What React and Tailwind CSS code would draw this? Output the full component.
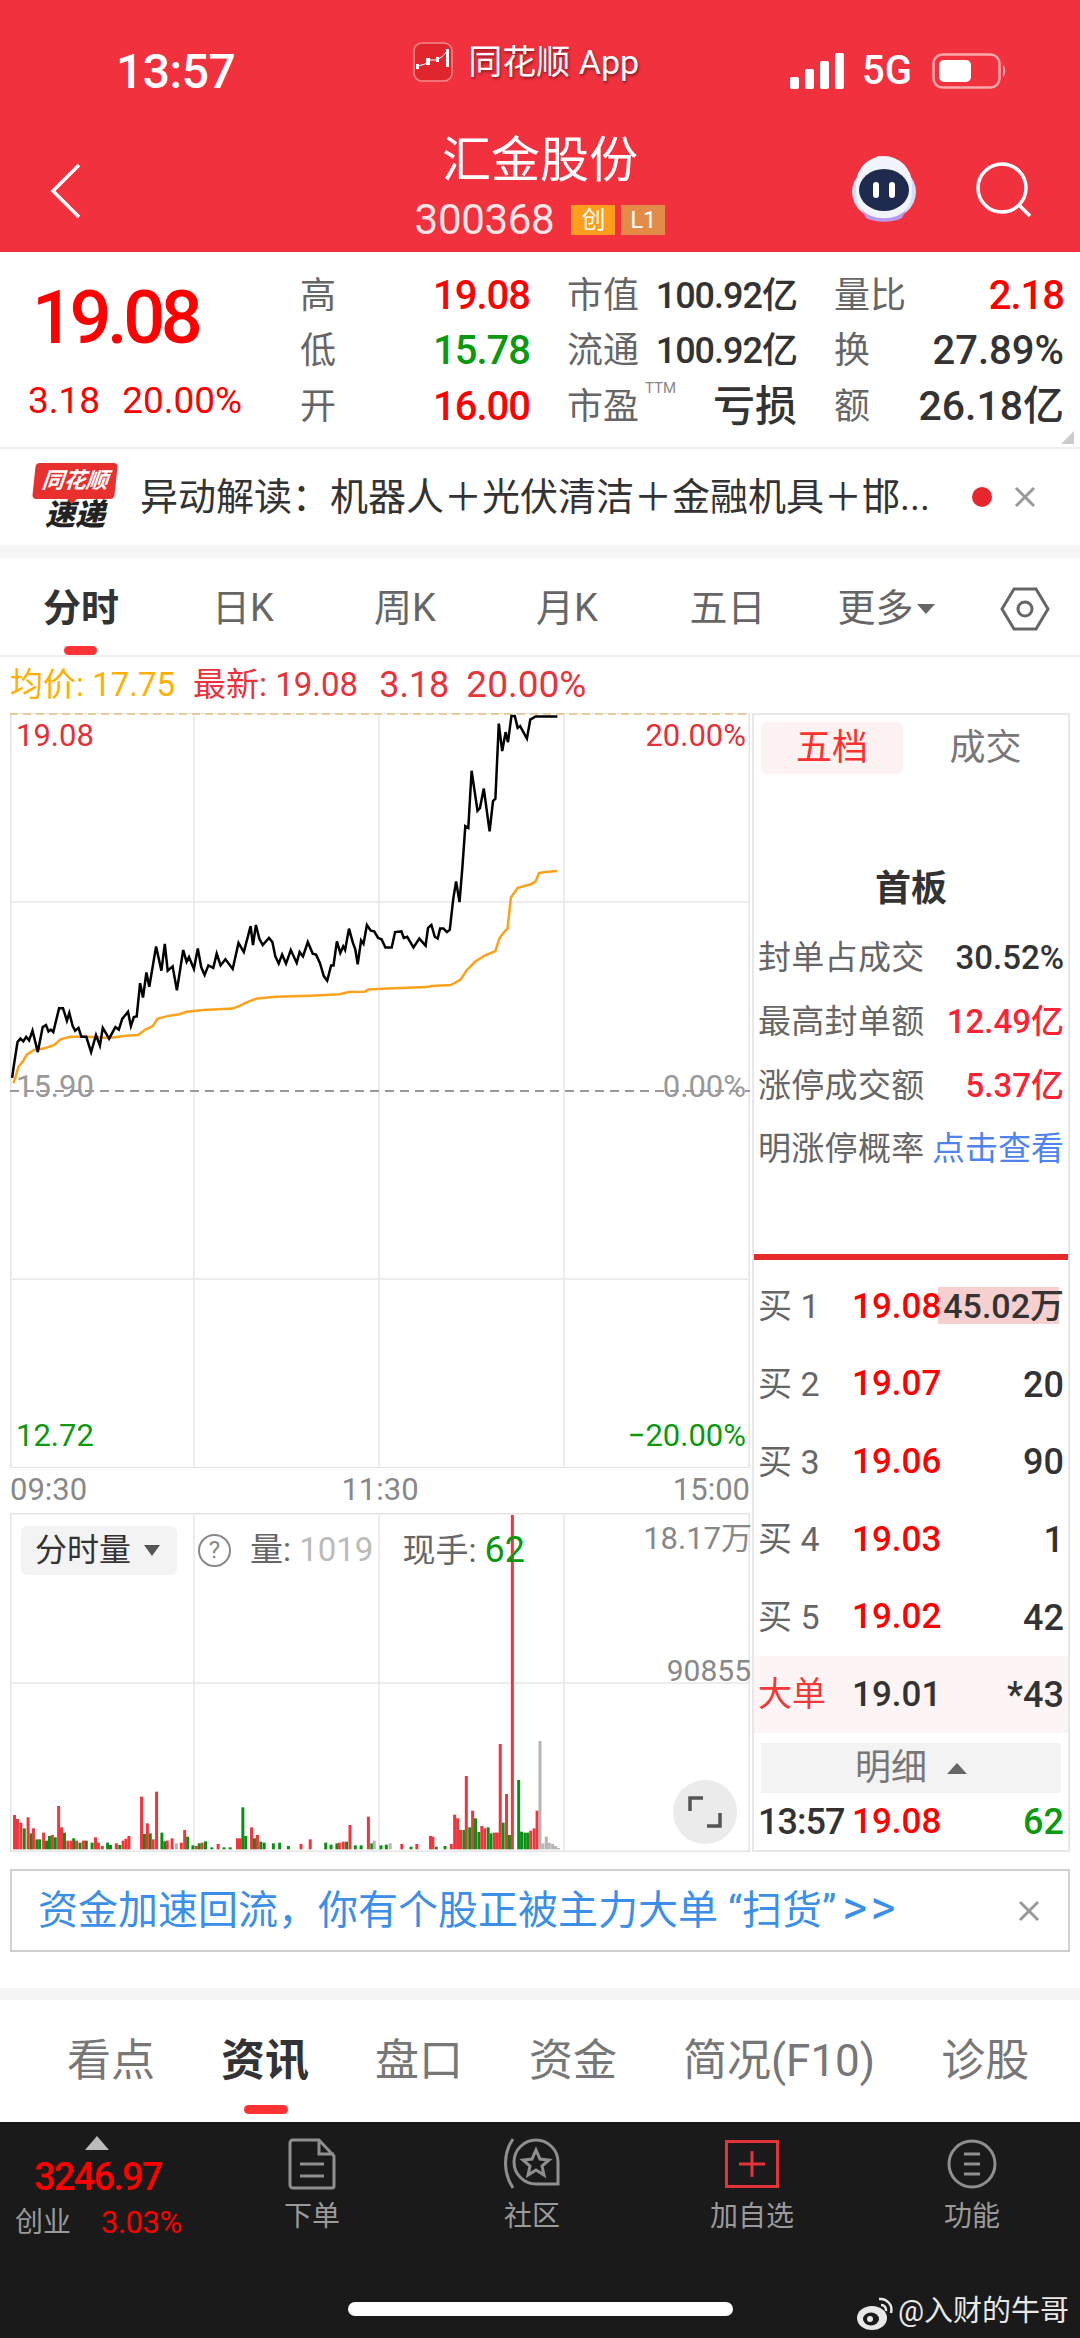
import React from "react";

const RED = "text-[#ff0000]";
const GREEN = "text-[#0a990f]";

// chart points are read off the reference, in 2.063x / 2.8x crop units
const toPts = (arr) =>
  arr.map(([x, y]) => `${(x / 2.063).toFixed(1)},${(560 + y / 2.8).toFixed(1)}`).join(" ");

const priceLine = [
  [25,1450],[28,1420],[36,1350],[42,1340],[48,1348],[54,1335],[60,1345],[67,1318],[78,1378],[88,1308],[95,1302],[100,1320],[105,1315],[110,1322],[122,1255],[130,1255],[138,1290],[143,1268],[150,1305],[155,1318],[162,1310],[168,1335],[178,1335],[188,1378],[198,1330],[206,1360],[212,1310],[225,1340],[238,1308],[245,1315],[252,1285],[264,1265],[270,1305],[276,1280],[282,1278],[289,1185],[295,1225],[302,1155],[308,1195],[322,1082],[333,1150],[340,1075],[346,1150],[356,1138],[365,1205],[378,1092],[385,1125],[390,1112],[400,1145],[408,1088],[415,1140],[422,1162],[430,1135],[440,1142],[447,1102],[455,1135],[465,1118],[480,1145],[492,1072],[503,1098],[517,1025],[522,1078],[528,1022],[535,1060],[542,1078],[555,1058],[562,1070],[568,1110],[575,1130],[582,1105],[590,1130],[600,1092],[612,1128],[618,1098],[625,1110],[635,1070],[645,1102],[652,1105],[660,1128],[668,1165],[675,1178],[683,1135],[688,1135],[695,1068],[702,1100],[708,1082],[712,1092],[720,1032],[728,1072],[733,1090],[738,1132],[745,1065],[750,1075],[757,1022],[765,1038],[772,1040],[780,1058],[787,1062],[795,1085],[808,1085],[815,1042],[828,1040],[833,1058],[840,1055],[853,1085],[865,1060],[878,1080],[883,1030],[890,1022],[897,1055],[903,1060],[908,1032],[915,1032],[922,1042],[928,1035],[935,950],[941,900],[948,958],[954,860],[960,745],[966,750],[973,590],[985,702],[990,695],[998,640],[1010,760],[1017,675],[1022,668],[1029,458],[1036,535],[1043,482],[1048,510],[1055,437],[1062,437],[1068,470],[1073,465],[1087,500],[1094,447],[1105,438],[1150,438],
];

const avgLine = [
  [28,1465],[38,1420],[48,1402],[55,1385],[70,1372],[90,1368],[112,1358],[125,1342],[145,1335],[180,1335],[225,1338],[260,1332],[285,1330],[300,1315],[315,1305],[325,1285],[345,1277],[370,1272],[385,1265],[420,1260],[480,1256],[495,1248],[510,1238],[530,1228],[570,1223],[640,1220],[700,1216],[720,1210],[752,1209],[760,1203],[800,1200],[880,1196],[890,1193],[930,1190],[950,1175],[962,1150],[980,1125],[1000,1108],[1022,1095],[1030,1060],[1040,1042],[1047,1032],[1054,945],[1068,918],[1095,908],[1105,900],[1112,877],[1125,874],[1150,871],
];

const redBars = [[30,1185],[36,1197],[43,1208],[58,1192],[69,1225],[90,1238],[108,1245],[121,1158],[127,1222],[140,1262],[147,1262],[158,1262],[172,1262],[197,1252],[203,1268],[211,1278],[240,1270],[254,1262],[260,1256],[266,1248],[292,1130],[304,1210],[316,1258],[323,1115],[345,1262],[355,1255],[374,1268],[381,1230],[405,1278],[417,1268],[450,1272],[490,1255],[496,1255],[519,1222],[531,1245],[621,1272],[640,1258],[700,1268],[708,1265],[722,1215],[760,1190],[829,1272],[860,1272],[888,1248],[893,1250],[931,1272],[938,1184],[944,1195],[950,1230],[962,1068],[975,1172],[994,1218],[1000,1225],[1020,1238],[1026,1238],[1032,972],[1045,1122],[1057,285],[1095,1232],[1102,1225],[1108,1172]];
const greenBars = [[50,1225],[64,1240],[76,1258],[82,1258],[96,1262],[102,1248],[114,1252],[133,1238],[152,1255],[165,1268],[178,1262],[190,1268],[222,1268],[228,1275],[247,1275],[298,1242],[310,1240],[334,1238],[340,1264],[387,1250],[398,1276],[411,1270],[424,1264],[437,1282],[462,1282],[475,1282],[501,1162],[507,1248],[525,1255],[538,1265],[545,1268],[564,1270],[577,1268],[595,1278],[672,1268],[683,1274],[695,1270],[715,1265],[733,1276],[745,1276],[767,1270],[786,1276],[797,1274],[848,1280],[900,1280],[918,1278],[957,1230],[969,1222],[981,1195],[988,1236],[1007,1222],[1013,1240],[1038,1208],[1051,1245],[1070,1080],[1076,1235],[1083,1238],[1089,1238]];
const grayBars = [[364,1270],[772,1262],[805,1270],[1114,963],[1120,1270],[1127,1250],[1133,1268],[1140,1272],[1146,1278],[1152,1284]];

function VolBars({ data, fill }) {
  return data.map(([x, top]) => (
    <rect key={x} x={x / 2.063 - 1.5} y={1420 + top / 3} width="3" height={(1288 - top) / 3} fill={fill} />
  ));
}

function AppIcon() {
  return (
    <svg width="40" height="40" viewBox="0 0 40 40">
      <rect x="1" y="1" width="38" height="38" rx="8" fill="#e0252c" stroke="#f28a8f" strokeWidth="1.5" />
      <polyline points="5,24 12,22 17,18 24,18 30,14 35,8" fill="none" stroke="#fff" strokeWidth="1" />
      <rect x="3" y="22" width="3" height="5" fill="#fff" />
      <rect x="13" y="16" width="4" height="7" fill="#fff" />
      <rect x="23" y="15" width="3" height="5" fill="#fff" />
      <rect x="33" y="7" width="3" height="18" fill="#fff" />
    </svg>
  );
}

function Robot() {
  return (
    <svg width="68" height="68" viewBox="0 0 68 68">
      <circle cx="29" cy="5" r="3" fill="#e8e8f8" />
      <path d="M29 8v6" stroke="#e8e8f8" strokeWidth="2" />
      <ellipse cx="34" cy="38" rx="32" ry="28" fill="#cfe0fb" />
      <path d="M6 30a28 28 0 0 1 56 0v8a28 28 0 0 1-56 0z" fill="#f2f4fc" />
      <path d="M12 56c10 11 34 11 44 0l-4 8c-10 5-26 5-36 0z" fill="#b69af2" />
      <ellipse cx="34" cy="36" rx="25" ry="21" fill="#1e2a4e" />
      <rect x="23" y="28" width="6" height="16" rx="3" fill="#fff" />
      <rect x="39" y="28" width="6" height="16" rx="3" fill="#fff" />
    </svg>
  );
}

function QuoteCell({ label, value, valueClass }) {
  return (
    <div className="flex items-center justify-between h-[55.5px]">
      <span className="text-[36px] text-[#666]">{label}</span>
      <span className={`font-medium ${valueClass}`}>{value}</span>
    </div>
  );
}

function SealRow({ label, value, valueClass }) {
  return (
    <div className="flex items-center justify-between h-[64px] pl-[4px] pr-[4px] whitespace-nowrap">
      <span className="text-[33px] text-[#666] tracking-[0.3px]">{label}</span>
      <span className={`text-[33px] font-medium ${valueClass}`}>{value}</span>
    </div>
  );
}

function BookRow({ label, price, qty, hl }) {
  return (
    <div className="relative flex items-center h-[77.7px] pl-[4px] pr-[4px] whitespace-nowrap">
      {hl && <div className="absolute right-[9px] top-[19px] w-[121px] h-[37px] bg-[#f6cfcf]" />}
      <span className="w-[94px] shrink-0 text-[34px] text-[#666]">买 {label}</span>
      <span className={`relative text-[35px] font-medium ${RED}`}>{price}</span>
      <span className={`relative ml-auto font-medium text-[#333] ${hl ? "text-[34px]" : "text-[36px]"}`}>{qty}</span>
    </div>
  );
}

function BottomItem({ label, children }) {
  return (
    <div className="flex flex-col items-center pt-[14px]">
      <div className="h-[56px] flex items-center">{children}</div>
      <span className="mt-[4px] text-[28px] text-[#9a9a9a]">{label}</span>
    </div>
  );
}

export default function App() {
  const quotes = [
    ["高", "19.08", `text-[40px] tracking-[-1px] ${RED}`, "市值", "100.92亿", "text-[36px] tracking-[-1px] text-[#333]", "量比", "2.18", `text-[40px] tracking-[-1px] ${RED}`],
    ["低", "15.78", `text-[40px] tracking-[-1px] ${GREEN}`, "流通", "100.92亿", "text-[36px] tracking-[-1px] text-[#333]", "换", "27.89%", "text-[40px] text-[#333]"],
  ];

  return (
    <div className="w-[1080px] h-[2338px] overflow-hidden bg-white font-[Roboto,'Noto_Sans_CJK_SC',sans-serif]">
      {/* header */}
      <div className="h-[252px] bg-[#f1313e] text-white">
        <div className="h-[126px] pt-[40px] pl-[116px] pr-[74px] flex items-start">
          <span className="mt-[8px] text-[48px] leading-[48px] font-medium tracking-[-0.5px]">13:57</span>
          <div className="ml-[178px] flex items-center h-[44px]">
            <AppIcon />
            <span className="ml-[15px] text-[34px] [text-shadow:1px_2px_3px_rgba(0,0,0,0.45)]">同花顺 App</span>
          </div>
          <div className="ml-auto mt-[11px] flex items-center">
            <svg width="54" height="36" viewBox="0 0 54 36" fill="#fff">
              <rect x="0" y="24" width="9" height="12" rx="2" />
              <rect x="15" y="16" width="9" height="20" rx="2" />
              <rect x="30" y="8" width="9" height="28" rx="2" />
              <rect x="45" y="0" width="9" height="36" rx="2" />
            </svg>
            <span className="ml-[18px] text-[40px] leading-[40px] font-medium">5G</span>
            <svg className="ml-[20px]" width="74" height="36" viewBox="0 0 74 36">
              <rect x="1.5" y="1.5" width="66" height="33" rx="9" fill="none" stroke="#f9a7ac" strokeWidth="2.5" />
              <rect x="7" y="7" width="32" height="22" rx="5" fill="#fff" />
              <path d="M71 12c3 2 3 10 0 12z" fill="#f9a7ac" />
            </svg>
          </div>
        </div>
        <div className="h-[126px] grid grid-cols-[1fr_auto_1fr]">
          <div className="pl-[50px] pt-[37px]">
            <svg width="32" height="56" viewBox="0 0 32 56" fill="none" stroke="#fff" strokeWidth="3.5">
              <polyline points="29,2 3,28 29,54" />
            </svg>
          </div>
          <div className="flex flex-col items-center">
            <div className="text-[49px] leading-[60px] mt-[5px]">汇金股份</div>
            <div className="flex items-center mt-[7px]">
              <span className="text-[42px] leading-[44px] tracking-[-0.3px] text-[#ffe5e5]">300368</span>
              <span className="ml-[17px] w-[44px] h-[30px] bg-[#ff9d1c] text-[24px] leading-[30px] text-center">创</span>
              <span className="ml-[6px] w-[44px] h-[30px] bg-[#e38c48] text-[24px] leading-[30px] text-center">L1</span>
            </div>
          </div>
          <div className="flex justify-end items-start pr-[48px] pt-[28px]">
            <Robot />
            <svg className="ml-[58px] mt-[8px]" width="56" height="56" viewBox="0 0 56 56" fill="none" stroke="#fff" strokeWidth="3.5">
              <circle cx="26" cy="26" r="24" />
              <path d="M43 43l11 11" />
            </svg>
          </div>
        </div>
      </div>

      {/* quote */}
      <div className="relative h-[197px] flex border-b-2 border-[#eee]">
        <div className="w-[300px] pl-[32px]">
          <div className={`mt-[26px] text-[74px] leading-[80px] font-medium tracking-[-4.5px] ${RED}`}>19.08</div>
          <div className={`mt-[21px] -ml-[4px] text-[37px] leading-[44px] whitespace-nowrap ${RED}`}>
            3.18<span className="ml-[22px]">20.00%</span>
          </div>
        </div>
        <div className="grid grid-cols-[230px_230px_230px] gap-x-[37px] content-start pt-[16px] whitespace-nowrap">
          {quotes.map((q) => (
            <React.Fragment key={q[0]}>
              <QuoteCell label={q[0]} value={q[1]} valueClass={q[2]} />
              <QuoteCell label={q[3]} value={q[4]} valueClass={q[5]} />
              <QuoteCell label={q[6]} value={q[7]} valueClass={q[8]} />
            </React.Fragment>
          ))}
          <QuoteCell label="开" value="16.00" valueClass={`text-[40px] tracking-[-1px] ${RED}`} />
          <div className="relative flex items-center justify-between h-[55.5px]">
            <span className="text-[36px] text-[#666]">市盈</span>
            <span className="absolute left-[78px] top-[-2px] text-[15px] text-[#888]">TTM</span>
            <span className="text-[42px] font-medium text-[#333]">亏损</span>
          </div>
          <QuoteCell label="额" value="26.18亿" valueClass="text-[41px] text-[#333]" />
        </div>
        <div className="absolute right-[6px] bottom-[3px] w-0 h-0 border-l-[13px] border-l-transparent border-b-[13px] border-b-[#ccc]" />
      </div>

      {/* ticker */}
      <div className="h-[96px] flex items-center pl-[33px]">
        <div className="w-[84px] flex flex-col items-center">
          <div className="relative w-[82px] h-[36px] bg-[#e8302f] rounded-[4px] -skew-x-6 text-white text-[22px] leading-[36px] font-bold italic text-center">
            同花顺
            <span className="absolute left-[34px] -bottom-[5px] w-0 h-0 border-x-[6px] border-x-transparent border-t-[6px] border-t-[#e8302f]" />
          </div>
          <div className="text-[30px] leading-[32px] font-black italic text-[#222]">速递</div>
        </div>
        <span className="ml-[23px] w-[824px] text-[38px] text-[#333] whitespace-nowrap overflow-hidden">异动解读：机器人＋光伏清洁＋金融机具＋邯...</span>
        <span className="ml-[8px] w-[20px] h-[20px] rounded-full bg-[#e8262e]" />
        <svg className="ml-[22px]" width="22" height="22" viewBox="0 0 22 22" stroke="#999" strokeWidth="3">
          <path d="M2 2l18 18M20 2L2 20" />
        </svg>
      </div>
      <div className="h-[13px] bg-[#f5f5f5]" />

      {/* period tabs */}
      <div className="relative h-[99px] pt-[4px] grid grid-cols-[repeat(5,162px)_152px_1fr] items-center border-b-2 border-[#eee] text-[38px] text-[#666]">
        <span className="text-center font-bold text-[#333]">分时</span>
        <span className="text-center">日K</span>
        <span className="text-center">周K</span>
        <span className="text-center">月K</span>
        <span className="-ml-[3px] text-center">五日</span>
        <span className="flex items-center justify-center">
          更多
          <span className="ml-[3px] w-0 h-0 border-x-[9px] border-x-transparent border-t-[10px] border-t-[#666]" />
        </span>
        <span className="pl-[8px] flex justify-center">
          <svg width="50" height="46" viewBox="0 0 50 46" fill="none" stroke="#666" strokeWidth="3">
            <path d="M14 3h22l12 20-12 20H14L2 23z" />
            <circle cx="25" cy="23" r="7" />
          </svg>
        </span>
        <span className="absolute left-[64px] bottom-0 w-[33px] h-[9px] rounded-full bg-[#ff3333]" />
      </div>

      {/* price info */}
      <div className="h-[56px] pl-[10px] flex items-center whitespace-nowrap">
        <span className="text-[33px] text-[#ffb000]">均价: 17.75</span>
        <span className="ml-[18px] text-[33px] text-[#e8333c]">最新: 19.08</span>
        <span className="ml-[21px] text-[36px] text-[#e8333c]">3.18</span>
        <span className="ml-[17px] text-[37px] text-[#e8333c]">20.00%</span>
      </div>

      {/* chart area */}
      <div className="flex h-[1139px] pl-[10px]">
        <div className="w-[740px]">
          <div className="relative h-[755px] text-[31px] whitespace-nowrap">
            <svg className="block" width="740" height="755" viewBox="10 713 740 755">
              <rect x="10.5" y="713" width="739" height="755" fill="none" stroke="#e4e4e4" strokeWidth="2" />
              <path d="M194 713v755M379 713v755M564 713v755M10 902h740M10 1279h740" stroke="#e8e8e8" strokeWidth="1.5" />
              <path d="M10 714h740" stroke="#e6c07f" strokeWidth="1.5" strokeDasharray="8 5" />
              <path d="M10 1091h740" stroke="#999" strokeWidth="2" strokeDasharray="9 6" />
              <polyline points={toPts(avgLine)} fill="none" stroke="#ffa11a" strokeWidth="2.5" />
              <polyline points={toPts(priceLine)} fill="none" stroke="#000" strokeWidth="2.5" />
            </svg>
            <span className="absolute left-[6px] top-[0px] text-[#e5303a]">19.08</span>
            <span className="absolute right-[4px] top-[0px] text-[#e5303a]">20.00%</span>
            <span className="absolute left-[6px] top-[351px] text-[#999]">15.90</span>
            <span className="absolute right-[4px] top-[351px] text-[#999]">0.00%</span>
            <span className={`absolute left-[6px] bottom-[9px] ${GREEN}`}>12.72</span>
            <span className={`absolute right-[4px] bottom-[9px] ${GREEN}`}>−20.00%</span>
          </div>
          <div className="h-[45px] flex items-center justify-between text-[31px] text-[#888]">
            <span>09:30</span>
            <span>11:30</span>
            <span>15:00</span>
          </div>
          <div className="relative h-[339px] whitespace-nowrap">
            <svg className="block" width="740" height="339" viewBox="10 1513 740 339">
              <rect x="10.5" y="1513.5" width="739" height="338" fill="none" stroke="#e4e4e4" strokeWidth="2" />
              <path d="M194 1513v339M379 1513v339M564 1513v339M10 1683h740" stroke="#e8e8e8" strokeWidth="1.5" />
              <VolBars data={greenBars} fill="#0a8f14" />
              <VolBars data={redBars} fill="#f0353c" />
              <VolBars data={grayBars} fill="#b5b5b5" />
            </svg>
            <div className="absolute inset-x-0 top-[10px] flex items-center text-[33px] text-[#666]">
              <div className="ml-[11px] w-[156px] h-[49px] rounded-[6px] bg-[#f3f3f3] flex items-center pl-[14px] text-[32px] text-[#333]">
                分时量
                <span className="ml-[13px] w-0 h-0 border-x-[8px] border-x-transparent border-t-[11px] border-t-[#555]" />
              </div>
              <span className="ml-[21px] w-[33px] h-[33px] rounded-full border-2 border-[#888] text-[24px] leading-[29px] text-center text-[#888]">?</span>
              <span className="ml-[19px]">量: <span className="text-[#bbb]">1019</span></span>
              <span className="ml-[29px]">现手: <span className={`text-[36px] ${GREEN}`}>62</span></span>
            </div>
            <span className="absolute -right-[2px] top-[3px] text-[31px] text-[#888]">18.17万</span>
            <span className="absolute -right-[1px] top-[135px] text-[30px] text-[#888]">90855</span>
            <div className="absolute left-[663px] top-[267px] w-[64px] h-[64px] rounded-full bg-[#ebebeb] flex items-center justify-center">
              <svg width="34" height="34" viewBox="0 0 34 34" fill="none" stroke="#555" strokeWidth="3.5">
                <path d="M2 16V3h13M32 18v13H19" />
              </svg>
            </div>
          </div>
        </div>

        {/* order book */}
        <div className="ml-[2px] w-[318px] h-[1139px] border-2 border-[#e8e8e8]">
          <div className="h-[545px] border-b-[6px] border-[#e42a2a]">
            <div className="flex pt-[7px] pl-[7px] h-[62px]">
              <div className="w-[142px] h-[52px] rounded-[6px] bg-[#fdf2f2] text-[36px] leading-[52px] text-center text-[#ff3030]">五档</div>
              <div className="flex-1 text-[36px] leading-[52px] text-center text-[#777]">成交</div>
            </div>
            <div className="mt-[87px] text-[36px] leading-[50px] font-bold text-center text-[#333]">首板</div>
            <div className="mt-[12px]">
              <SealRow label="封单占成交" value="30.52%" valueClass="text-[#333]" />
              <SealRow label="最高封单额" value="12.49亿" valueClass="text-[#ff2233]" />
              <SealRow label="涨停成交额" value="5.37亿" valueClass="text-[#ff2233]" />
              <div className="flex items-center justify-between h-[62px] pl-[4px] pr-[4px] whitespace-nowrap">
                <span className="text-[33px] text-[#666] tracking-[0.3px]">明涨停概率</span>
                <span className="text-[33px] text-[#4f83ee]">点击查看</span>
              </div>
            </div>
          </div>
          <div className="pt-[8px]">
            <BookRow label="1" price="19.08" qty="45.02万" hl />
            <BookRow label="2" price="19.07" qty="20" />
            <BookRow label="3" price="19.06" qty="90" />
            <BookRow label="4" price="19.03" qty="1" />
            <BookRow label="5" price="19.02" qty="42" />
            <div className="flex items-center h-[77px] pl-[4px] pr-[4px] bg-[#fdf5f5]">
              <span className="w-[94px] text-[34px] text-[#f03a3a]">大单</span>
              <span className="text-[35px] font-medium text-[#333]">19.01</span>
              <span className="ml-auto text-[36px] font-medium text-[#333]">*43</span>
            </div>
            <div className="mx-[7px] mt-[10px] h-[50px] bg-[#f3f3f3] flex items-center justify-center text-[36px] text-[#777]">
              明细
              <span className="ml-[20px] w-0 h-0 border-x-[10px] border-x-transparent border-b-[11px] border-b-[#666]" />
            </div>
            <div className="flex items-center h-[58px] pl-[4px] pr-[4px] text-[36px] font-medium">
              <span className="w-[94px] text-[#333] tracking-[-1px]">13:57</span>
              <span className={`text-[35px] ${RED}`}>19.08</span>
              <span className={`ml-auto ${GREEN}`}>62</span>
            </div>
          </div>
        </div>
      </div>

      {/* ad strip */}
      <div className="mx-[10px] mt-[17px] h-[83px] border-2 border-[#d0d0d0] flex items-center pl-[26px] pr-[28px] text-[40px] text-[#3b8fe8] whitespace-nowrap">
        <span>
          资金加速回流，你有个股正被主力大单 “扫货”<span className="ml-[6px] text-[48px] leading-[40px] tracking-[3px]">&gt;&gt;</span>
        </span>
        <svg className="ml-auto" width="22" height="22" viewBox="0 0 22 22" stroke="#999" strokeWidth="3">
          <path d="M2 2l18 18M20 2L2 20" />
        </svg>
      </div>
      <div className="h-[36px]" />
      <div className="h-[12px] bg-[#f5f5f5]" />

      {/* content tabs */}
      <div className="relative h-[122px] pl-[67px] flex items-center gap-[66px] text-[44px] text-[#777] whitespace-nowrap">
        <span>看点</span>
        <span className="font-bold text-[#333]">资讯</span>
        <span>盘口</span>
        <span>资金</span>
        <span>简况(F10)</span>
        <span>诊股</span>
        <span className="absolute left-[244px] bottom-[8px] w-[44px] h-[9px] rounded-full bg-[#ff3333]" />
      </div>

      {/* bottom bar */}
      <div className="relative h-[216px] bg-[#1a1a1a] grid grid-cols-[202px_repeat(4,220px)] items-start">
        <div className="flex flex-col items-start pl-[15px] pt-[14px] whitespace-nowrap">
          <span className="ml-[70px] w-0 h-0 border-x-[12px] border-x-transparent border-b-[14px] border-b-[#bbb]" />
          <span className="ml-[19px] mt-[5px] text-[38px] leading-[44px] font-medium tracking-[-1.8px] text-[#ff0000]">3246.97</span>
          <div className="mt-[1px] flex items-center">
            <span className="text-[28px] text-[#999]">创业</span>
            <span className="ml-[30px] text-[31px] tracking-[-0.5px] text-[#ff0000]">3.03%</span>
          </div>
        </div>
        <BottomItem label="下单">
          <svg width="48" height="52" viewBox="0 0 48 52" fill="none" stroke="#8f8f8f" strokeWidth="3">
            <path d="M5 2h26l15 16v30a2 2 0 0 1-2 2H5a3 3 0 0 1-3-3V5a3 3 0 0 1 3-3zM31 2v14h15M12 26h24M12 38h24" />
          </svg>
        </BottomItem>
        <BottomItem label="社区">
          <svg width="56" height="54" viewBox="0 0 56 54" fill="none" stroke="#8f8f8f" strokeWidth="3">
            <path d="M9 2C-1 16-1 36 9 51" />
            <path d="M54 47H32A22 22 0 1 1 54 25z" />
            <path d="M32 13l4 9 9 1-7 6 2 9-8-5-8 5 2-9-7-6 9-1z" />
          </svg>
        </BottomItem>
        <BottomItem label="加自选">
          <svg width="54" height="48" viewBox="0 0 54 48" fill="none" stroke="#e5333a" strokeWidth="3">
            <rect x="1.5" y="1.5" width="51" height="45" />
            <path d="M27 11v26M14 24h26" />
          </svg>
        </BottomItem>
        <BottomItem label="功能">
          <svg width="50" height="50" viewBox="0 0 50 50" fill="none" stroke="#8f8f8f" strokeWidth="3">
            <circle cx="25" cy="25" r="23" />
            <path d="M17 15h16M17 25h16M17 35h16" />
          </svg>
        </BottomItem>
        <div className="absolute left-[348px] top-[180px] w-[385px] h-[14px] rounded-full bg-white" />
        <div className="absolute left-[855px] top-[168px] flex items-center text-[29px] text-[#e8e8e8] whitespace-nowrap">
          <svg width="40" height="40" viewBox="0 0 40 40" fill="none">
            <ellipse cx="17" cy="26" rx="15" ry="12" fill="#e8e8e8" />
            <ellipse cx="16" cy="27" rx="8" ry="6.5" fill="#1a1a1a" />
            <circle cx="15" cy="27" r="3" fill="#e8e8e8" />
            <path d="M24 7a11 11 0 0 1 12 14M26 13a5 5 0 0 1 5 6" stroke="#e8e8e8" strokeWidth="2.5" />
          </svg>
          <span className="ml-[3px]">@入财的牛哥</span>
        </div>
      </div>
    </div>
  );
}
